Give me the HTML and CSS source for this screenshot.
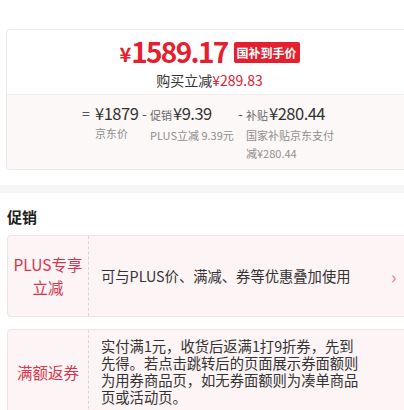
FILE: index.html
```html
<!DOCTYPE html>
<html lang="zh-CN">
<head>
    <meta charset="UTF-8">
    <meta name="viewport" content="width=device-width, initial-scale=1.0">
    <title>价格详情</title>
    <link rel="stylesheet" href="styles.css">
</head>
<body>

    <div class="price-card">
        <div class="price-top">
            <div class="final-price">
                <span class="yen">¥</span><span class="amount">1589.17</span>
                <span class="badge">国补到手价</span>
            </div>
            <div class="saving">购买立减<span class="red">¥289.83</span></div>
        </div>

        <div class="price-calc">
            <div class="calc-item">
                <span class="op">=</span>
                <div class="calc-body first">
                    <div class="calc-main"><span class="num">¥1879</span></div>
                    <div class="calc-sub">京东价</div>
                </div>
            </div>
            <div class="calc-item">
                <span class="op">-</span>
                <div class="calc-body second">
                    <div class="calc-main"><span class="tag">促销</span><span class="num">¥9.39</span></div>
                    <div class="calc-sub">PLUS立减 9.39元</div>
                </div>
            </div>
            <div class="calc-item">
                <span class="op">-</span>
                <div class="calc-body third">
                    <div class="calc-main"><span class="tag">补贴</span><span class="num">¥280.44</span></div>
                    <div class="calc-sub">国家补贴京东支付减¥280.44</div>
                </div>
            </div>
        </div>
    </div>

    <div class="divider"></div>

    <div class="promo">
        <h2>促销</h2>

        <div class="promo-row">
            <div class="promo-label">PLUS专享<br>立减</div>
            <div class="promo-text single">可与PLUS价、满减、券等优惠叠加使用</div>
            <span class="arrow">›</span>
        </div>

        <div class="promo-row">
            <div class="promo-label">满额返券</div>
            <div class="promo-text">实付满1元，收货后返满1打9折券，先到先得。若点击跳转后的页面展示券面额则为用券商品页，如无券面额则为凑单商品页或活动页。</div>
        </div>
    </div>

</body>
</html>
```

FILE: styles.css
```css
body {
    margin: 0;
    width: 404px;
    overflow: hidden;
    background-color: #fff;
    font-family: "Noto Sans CJK SC", "Noto Sans", sans-serif;
    color: #333;
}

.price-card {
    width: 405px;
    margin: 29px 0 0 6px;
    border: 1px solid #e9e9e9;
    border-radius: 4px;
    overflow: hidden;
}

.price-top {
    height: 64px;
    text-align: center;
}

.final-price {
    display: flex;
    justify-content: center;
    align-items: center;
    height: 41px;
    color: #e4202e;
}

.yen {
    font-size: 20px;
    line-height: 24px;
    font-weight: bold;
    margin-top: 6px;
}

.amount {
    font-size: 28px;
    line-height: 36px;
    font-weight: bold;
    letter-spacing: -1.7px;
}

.badge {
    background-color: #e4202e;
    color: #fff;
    font-size: 12px;
    font-weight: bold;
    line-height: 21px;
    padding: 0 3px;
    border-radius: 2px;
    margin-left: 6px;
    margin-top: 3px;
}

.saving {
    font-size: 14px;
    line-height: 18px;
    color: #333;
}

.red {
    color: #e4202e;
}

.price-calc {
    background-color: #fdf8f8;
    border-top: 1px solid #f5eeee;
    display: flex;
    padding: 7px 0 0 75px;
    height: 67px;
}

.calc-item {
    display: flex;
    align-items: flex-start;
}

.op {
    font-size: 14px;
    line-height: 22px;
    color: #555;
    width: 13px;
}

.calc-item + .calc-item .op {
    width: 8px;
}

.calc-body.first {
    width: 47px;
}

.calc-body.second {
    width: 88px;
}

.calc-body.third {
    width: 88px;
}

.calc-main {
    line-height: 22px;
    white-space: nowrap;
}

.num {
    font-size: 16.5px;
    color: #333;
    letter-spacing: -0.5px;
}

.tag {
    font-size: 11px;
    color: #666;
    margin-right: 1px;
}

.calc-sub {
    font-size: 11px;
    line-height: 18px;
    color: #8e8e8e;
}

.divider {
    height: 8px;
    background-color: #f6f6f9;
    margin-top: 15px;
}

.promo {
    padding: 0 0 0 7px;
}

.promo h2 {
    font-size: 15px;
    font-weight: bold;
    color: #222;
    margin: 0;
    line-height: 20px;
    padding: 14px 0 8px;
}

.promo-row {
    width: 404px;
    display: flex;
    align-items: center;
    background-color: #fdf4f5;
    border: 1px solid #f1e2e4;
    border-radius: 4px;
    margin-bottom: 12px;
}

.promo-label {
    width: 80px;
    align-self: stretch;
    display: flex;
    align-items: center;
    justify-content: center;
    text-align: center;
    border-right: 1px dashed #e6cfd3;
    color: #d8344d;
    font-size: 15.5px;
    line-height: 23px;
}

.promo-text {
    width: 260px;
    padding: 7px 0 9px 12px;
    font-size: 14.3px;
    line-height: 17px;
    color: #333;
}

.promo-text.single {
    padding: 30px 0 31px 12px;
    line-height: 19px;
}

.arrow {
    color: #e57b90;
    font-size: 18px;
    margin-left: 30px;
}
```
